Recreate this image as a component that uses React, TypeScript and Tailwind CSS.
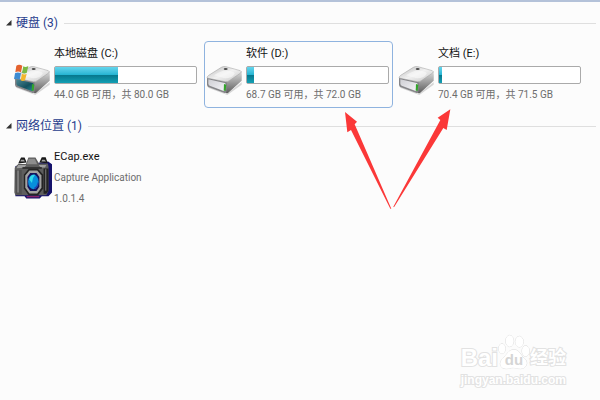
import type { ReactNode } from 'react';

type Drive = {
	name: string;
	detail: string;
	used: number;
	system?: boolean;
	selected?: boolean;
};

const drives: Drive[] = [
	{ name: '本地磁盘 (C:)', detail: '44.0 GB 可用，共 80.0 GB', used: 45, system: true },
	{ name: '软件 (D:)', detail: '68.7 GB 可用，共 72.0 GB', used: 5, selected: true },
	{ name: '文档 (E:)', detail: '70.4 GB 可用，共 71.5 GB', used: 2 },
];

function DriveIcon({ system }: { system?: boolean }) {
	return (
		<svg viewBox="0 0 108 96" className="h-8 w-9 shrink-0" aria-hidden="true">
			<defs>
				<linearGradient id="drive-top" x1="0" y1="0" x2="1" y2="1">
					<stop offset="0" stopColor="#b9b9b9" />
					<stop offset="0.5" stopColor="#f1f1f1" />
					<stop offset="1" stopColor="#c4c4c4" />
				</linearGradient>
				<linearGradient id="drive-side" x1="0" y1="0" x2="0" y2="1">
					<stop offset="0" stopColor="#dadada" />
					<stop offset="1" stopColor="#5c5c5c" />
				</linearGradient>
				<linearGradient id="drive-front" x1="0" y1="0" x2="1" y2="1">
					<stop offset="0" stopColor="#cfcfd4" />
					<stop offset="1" stopColor="#f4f4f8" />
				</linearGradient>
				<linearGradient id="drive-teal" x1="0" y1="0" x2="1" y2="1">
					<stop offset="0" stopColor="#4d8794" />
					<stop offset="0.6" stopColor="#14515f" />
					<stop offset="1" stopColor="#268b96" />
				</linearGradient>
			</defs>
			<path d="M4 66 L62 90 L107 55 L107 62 L64 93 L8 72Z" fill="#bdbdbd" opacity="0.6" />
			<path d="M60 52 L106 23 Q108 26 107 50 L67 86 Q62 90 58 86Z" fill="url(#drive-side)" />
			<path d="M3 42 Q3 38 8 34 L46 10 Q52 6 60 8 L103 20 Q109 23 104 27 L70 50 Q64 55 57 53Z" fill="url(#drive-top)" stroke="#9d9d9d" strokeWidth="1.5" />
			<path d="M24 34 Q49 16 67 20 Q91 24 85 31 Q78 43 57 43Z" fill="#fafafa" opacity="0.6" />
			<path d="M3 42 L60 54 Q63 55 63 60 L61 85 Q59 88 53 86 L7 69 Q4 67 3 62Z" fill="#858588" />
			<path d="M7 46 L56 57 Q59 58 59 62 L57 79 Q55 82 51 80 L11 65 Q8 63 7 59Z" fill={system ? 'url(#drive-teal)' : 'url(#drive-front)'} />
			<path d="M54 60 L61 62 L59 80 L53 80Z" fill="#33a52b" />
			<ellipse cx="59" cy="15" rx="6" ry="3" fill="#4b4b4b" />
			{system && (
				<g>
					<path d="M7 5 Q15 -1 25 5 L21 25 Q12 20 4 25Z" fill="#e4622e" />
					<path d="M28 7 Q34 11 43 6 L38 27 Q30 30 24 26Z" fill="#79b943" />
					<path d="M3 28 Q11 23 21 28 L17 47 Q8 42 0 46Z" fill="#3d8bd2" />
					<path d="M24 29 Q30 33 38 30 L33 49 Q25 53 20 48Z" fill="#f3b62c" />
				</g>
			)}
		</svg>
	);
}

function CameraIcon() {
	return (
		<svg viewBox="0 6 108 122" className="h-11 w-[38px] shrink-0" aria-hidden="true">
			<path d="M4 33 L97 20 L108 28 L108 108 L98 119 L79 119 L73 125 L35 125 L30 119 L4 119Z" fill="#15126b" />
			<path d="M12 26 L20 9 L30 9 L36 23Z M72 23 L79 8 L90 8 L96 25Z" fill="#191919" />
			<path d="M20 15 L28 15 L31 20 L18 20Z M80 15 L87 15 L91 20 L78 20Z" fill="#a4a4a4" />
			<path d="M2 38 L12 27 L34 27 L41 9 L61 9 L71 26 L96 26 L98 34 L98 103 L92 116 L4 116 L1 108Z" fill="#5e5e5e" />
			<path d="M42 12 L59 12 L66 28 L36 28Z" fill="#8d8d8d" />
			<path d="M12 30 L35 30 L29 38 L7 39Z M70 30 L92 30 L88 37 L76 37Z" fill="#a0a0a0" />
			<path d="M3 44 H22 V114 H6Z" fill="#505050" />
			<path d="M9 46 H14 V108 H9Z" fill="#808080" />
			<path d="M84 40 H98 V103 L92 112 H84Z" fill="#232323" />
			<path d="M88 42 H92 V103 H88Z" fill="#666666" />
			<path d="M24 36 H79 V41 H24Z" fill="#303030" />
			<path d="M42 41 L68 41 L83 58 L83 97 L68 117 L42 117 L28 97 L28 58Z" fill="#242424" />
			<path d="M44 46 L66 46 L78 60 L78 95 L66 111 L44 111 L32 95 L32 60Z" fill="#a2a2a2" />
			<path d="M46 53 L64 53 L72 64 L72 92 L64 104 L46 104 L38 92 L38 64Z" fill="#15135c" />
			<ellipse cx="55" cy="78" rx="15" ry="21" fill="#078fdc" />
			<path d="M43 71 Q47 56 60 58 Q52 66 51 81Z" fill="#30dae9" />
			<path d="M57 95 Q67 89 67 76 Q71 91 60 99Z" fill="#2240b4" />
			<path d="M36 118 H72 V122 H36Z" fill="#8b226b" />
		</svg>
	);
}

function Group({ title, children }: { title: string; children: ReactNode }) {
	return (
		<section>
			<header className="flex h-8 items-center gap-1 pl-1.5 pr-1">
				<svg viewBox="0 0 6 6" className="size-1.5 shrink-0" aria-hidden="true">
					<path d="M5.5 0 V5.5 H0Z" fill="#333333" />
				</svg>
				<h2 className="text-[12px] leading-5 text-[#263c8d]">{title}</h2>
				<span className="ml-0.5 h-px flex-1 bg-[#dfdfdf]" />
			</header>
			{children}
		</section>
	);
}

function DriveTile({ drive }: { drive: Drive }) {
	return (
		<button
			type="button"
			className={`flex w-[189px] items-center gap-1 rounded-sm border pb-0.5 pl-px pr-[3px] pt-0.5 text-left ${
				drive.selected ? 'border-[#8fb3df]' : 'border-transparent'
			}`}
		>
			<span className="pt-2.5">
				<DriveIcon system={drive.system} />
			</span>
			<span className="block min-w-0 flex-1">
				<span className="block text-[11px] leading-5 text-[#111111]">{drive.name}</span>
				<span
					role="meter"
					aria-label={drive.name}
					aria-valuenow={drive.used}
					className="mb-px mt-0.5 flex h-[18px] rounded-xs border border-[#aaaaaa] bg-white"
				>
					<span
						className="bg-linear-to-b from-[#62d5ed] from-0% via-[#21b4d2] via-50% to-[#13a2b8]"
						style={{ width: `${drive.used}%` }}
					>
						<span className="mt-2 block h-2 bg-linear-to-b from-[#06778c] to-[#12a0b5]" />
					</span>
				</span>
				<span className="block whitespace-nowrap text-[10px] leading-5 text-[#6d6d6d]">
					{drive.detail}
				</span>
			</span>
		</button>
	);
}

function Arrows() {
	return (
		<svg
			viewBox="0 0 450 345"
			className="pointer-events-none absolute left-[320px] top-[98px] h-[115px] w-[150px]"
			aria-hidden="true"
		>
			<path d="M75 36 L111 65 L104 73 L214 326 L211 326 L93 90 L82 97Z" fill="#fb3838" />
			<path d="M391 28 L380 90 L370 84 L222 322 L220 320 L361 60 L353 53Z" fill="#fb3838" />
		</svg>
	);
}

function Watermark() {
	return (
		<div className="pointer-events-none absolute bottom-2.5 right-[34px] font-['Liberation_Sans','Noto_Sans_CJK_SC',sans-serif] font-bold text-white [-webkit-text-stroke:2px_#e2e2e2] [paint-order:stroke_fill]">
			<div className="flex items-end">
				<span className="text-[24px] leading-6">Bai</span>
				<span className="relative flex h-9 w-8 items-end justify-center">
					<svg viewBox="0 0 96 108" className="absolute inset-0 size-full" aria-hidden="true">
						<g fill="#ffffff" stroke="#dedede" strokeWidth="3">
							<ellipse cx="12" cy="44" rx="10" ry="15" />
							<ellipse cx="35" cy="21" rx="12" ry="17" />
							<ellipse cx="64" cy="23" rx="12" ry="16" />
							<ellipse cx="83" cy="51" rx="11" ry="16" />
							<path d="M48 47 C65 47 67 64 80 74 C93 86 84 104 68 104 C57 104 54 101 46 101 C38 101 35 104 24 104 C6 104 1 86 15 73 C27 63 31 47 48 47Z" />
						</g>
					</svg>
					<span className="relative text-[15px] leading-5 text-[#d5d5d5] [-webkit-text-stroke:0px]">du</span>
				</span>
				<span className="text-[18px] leading-6">经验</span>
			</div>
			<div className="text-[12px] leading-5">jingyan.baidu.com</div>
		</div>
	);
}

export default function App() {
	return (
		<main className="relative min-h-screen overflow-hidden border-t-2 border-[#b4c2d9] bg-[#fcfcfc] pt-[5px] font-['Roboto','Noto_Sans_CJK_SC',sans-serif]">
			<Group title="硬盘 (3)">
				<div className="flex flex-wrap gap-[3px] pb-0.5 pl-3 pt-0.5">
					{drives.map((drive) => (
						<DriveTile key={drive.name} drive={drive} />
					))}
				</div>
			</Group>

			<Group title="网络位置 (1)">
				<button type="button" className="ml-3 mt-1 flex items-center gap-0.5 pl-0.5 text-left">
					<CameraIcon />
					<span className="block text-[10px] leading-[21px] text-[#6d6d6d]">
						<span className="block text-[11px] text-[#111111]">ECap.exe</span>
						<span className="block">Capture Application</span>
						<span className="block">1.0.1.4</span>
					</span>
				</button>
			</Group>

			<Arrows />
			<Watermark />
		</main>
	);
}
